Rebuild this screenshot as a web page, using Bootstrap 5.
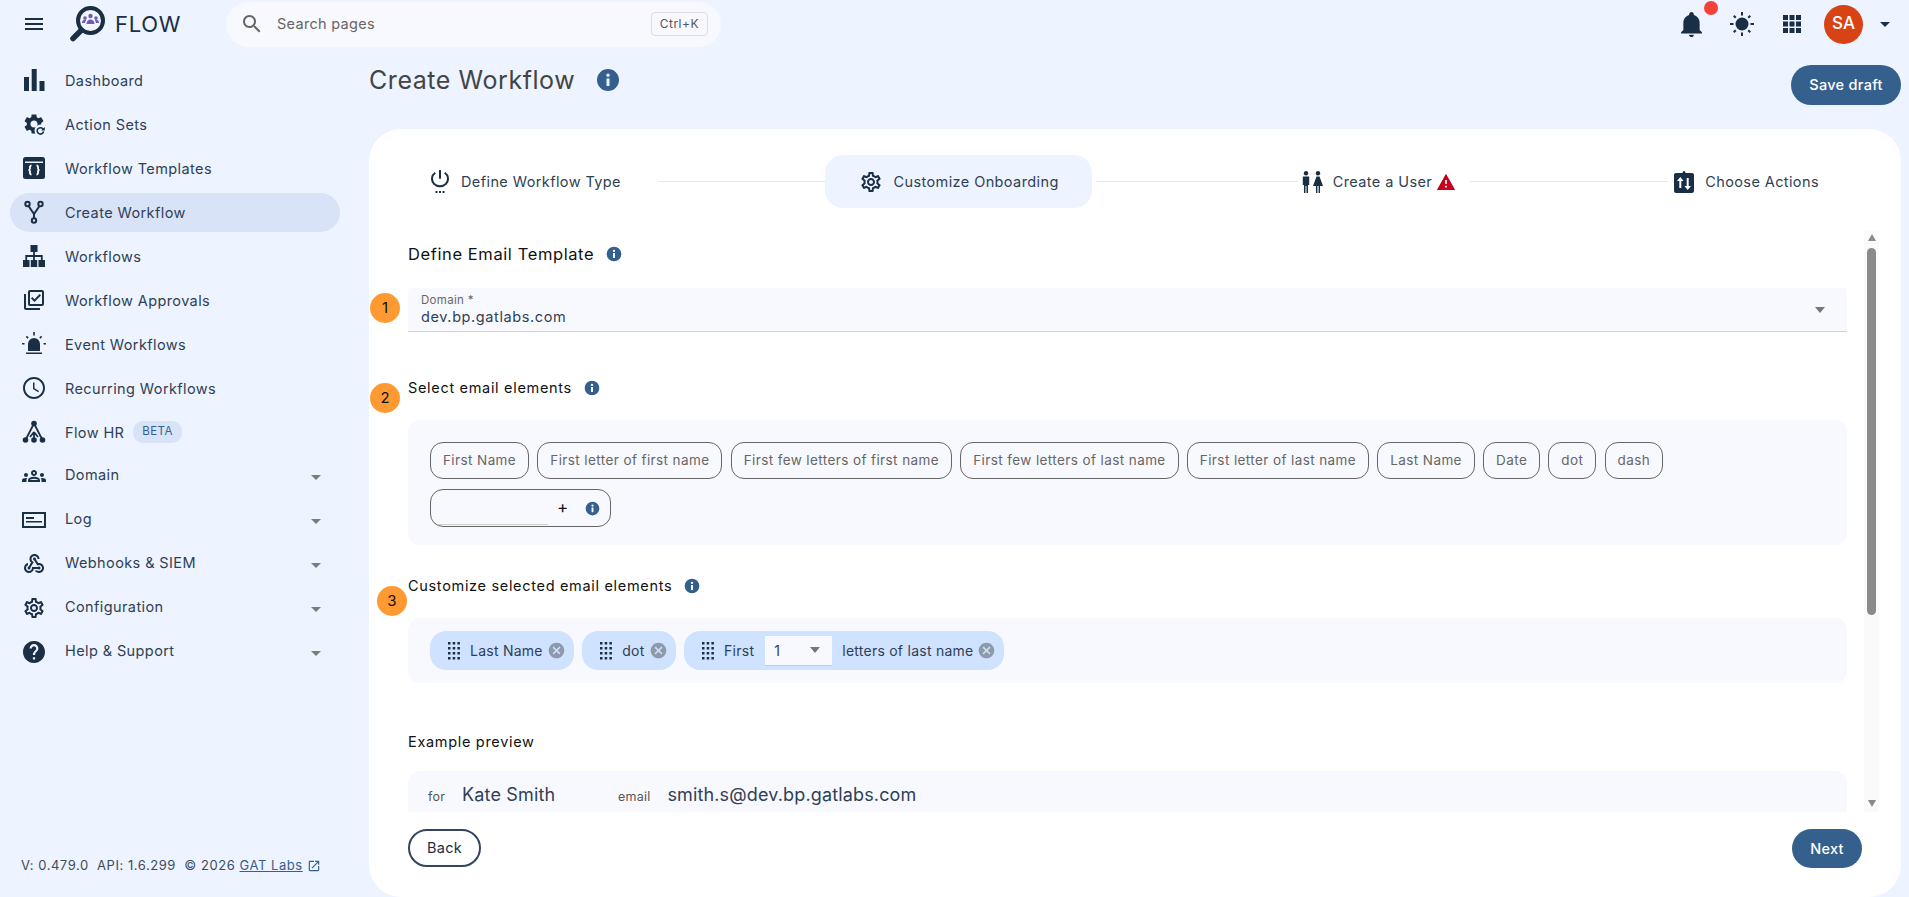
<!DOCTYPE html>
<html lang="en">
<head>
  <meta charset="UTF-8">
  <meta name="viewport" content="width=device-width, initial-scale=1">
  <title>Create Workflow - FLOW</title>
  <link href="https://cdn.jsdelivr.net/npm/bootstrap@5.3.0/dist/css/bootstrap.min.css" rel="stylesheet">
  <style>
    html, body { height: 100%; }
    body {
      background: #edf3ff;
      font-family: Inter, "Liberation Sans", sans-serif;
      color: #2f3f55;
      font-size: 14.5px;
      overflow: hidden;
    }
    .ico { width: 24px; height: 24px; fill: #1a2e46; flex: none; }

    /* top bar */
    .top-bar { height: 48px; padding-left: 22px; }
    .brand-logo { width: 38px; height: 38px; margin-left: 23px; flex: none; }
    .brand-name { font-size: 22px; color: #1a2e46; margin-left: 8px; width: 111px; letter-spacing: .7px; }
    .search-pill { width: 495px; height: 45px; background: #f7f9ff; border-radius: 23px; padding: 0 13px 0 14px; color: #666; font-size: 14.5px; letter-spacing: .3px; }
    .search-pill .ico { fill: #666; }
    .search-text { margin-left: 13px; }
    .search-keys { border: 1px solid #dcdee3; border-radius: 4px; font-size: 12px; padding: 3px 8px; color: #555; height: 24px; letter-spacing: .5px; }
    .top-tools { padding-right: 19px; }
    .bell-wrap { margin-right: 28px; }
    .bell-ico { width: 21px; height: 25px; }
    .bell-dot { width: 14px; height: 14px; background: #f44336; border-radius: 50%; top: -11px; right: -16px; }
    .sun-ico { margin-right: 26px; }
    .apps-ico { margin-right: 20px; }
    .avatar-round { width: 39px; height: 39px; background: #d84315; color: #fff; border-radius: 50%; font-size: 17px; font-weight: 500; margin-right: 17px; }
    .caret-down { width: 0; height: 0; border-left: 5.5px solid transparent; border-right: 5.5px solid transparent; border-top: 5.5px solid #1a2e46; }

    /* sidebar */
    .side-col { width: 369px; height: 849px; flex: none; padding-top: 10px; }
    .side-item { width: 330px; height: 39px; margin: 2.5px 0 2.5px 10px; padding: 0 19px 0 12px; border-radius: 20px; color: #2f3f55; text-decoration: none; letter-spacing: .4px; }
    .side-item .ico { margin-right: 19px; }
    .side-item.is-active { background: #d8e3f8; }
    .side-label { margin-top: 2px; }
    .side-item.is-group .side-label { margin: 0 0 3px; }
    .beta-tag { background: #d8e3f8; color: #35608d; font-size: 11.5px; border-radius: 10px; padding: 2px 9px; margin-left: 9px; }
    .side-caret { width: 0; height: 0; border-left: 5.5px solid transparent; border-right: 5.5px solid transparent; border-top: 5.5px solid #7b7b7b; margin-left: auto; margin-top: 2px; }
    .side-foot { margin-top: auto; padding: 0 0 22px 21px; font-size: 13px; letter-spacing: .55px; color: #3d4b5e; }
    .side-foot a { color: #35608d; }
    .side-foot .ico { width: 14px; height: 14px; fill: #35608d; vertical-align: -3px; margin-left: 4px; }

    /* main */
    .main-col { padding-right: 8px; min-width: 0; }
    .title-row { height: 81px; }
    .page-title { font-size: 25px; font-weight: 400; color: #444; margin: 14px 0 0; line-height: 36px; letter-spacing: .56px; }
    .title-info { width: 24px; height: 24px; margin: 20px 0 0 21px; fill: #35608d; }
    .btn-flow { background: #35608d; color: #fff; border: 0; border-radius: 20px; font-size: 14.5px; font-weight: 500; letter-spacing: .3px; }
    .btn-flow:hover { background: #2c5179; color: #fff; }
    .btn-save { width: 110px; height: 40px; margin-top: 17px; }
    .flow-sheet { height: 768px; background: #fff; border-radius: 32px; }

    /* stepper */
    .step-row { padding: 26px 0 0 59px; height: 101px; }
    .step-item { height: 53px; white-space: nowrap; letter-spacing: .4px; color: #2f3f55; }
    .step-item .ico { margin-right: 9px; }
    .step-item.is-active { background: #edf3ff; border-radius: 18px; padding: 0 33px 0 34px; }
    .step-item.is-active .ico { margin-right: 10.5px; }
    .step-line { height: 1px; background: #e6e6e6; flex: none; }
    .line-one { width: 166px; margin: 26px 0 0 38px; }
    .line-two { width: 201px; margin: 26px 2px 0 5px; }
    .line-three { width: 198px; margin: 26px 4px 0 14px; }
    .step-item .warn-ico { width: 20px; height: 20px; fill: #c4001d; margin: 0 0 0 4px; }

    /* scrolling part */
    .scroll-row { height: 582px; }
    .scroll-inner { width: 1478px; padding-left: 39px; overflow: hidden; }
    .sect-head { height: 24px; color: #111; letter-spacing: .68px; }
    .sect-head-lg { font-size: 16.5px; letter-spacing: .6px; margin-top: 12px; }
    .info-ico { width: 16px; height: 16px; fill: #35608d; margin-left: 12px; }
    .num-bullet { width: 30px; height: 30px; background: #ff9a33; color: #111; border-radius: 50%; font-size: 15px; left: -38px; }
    .n-one { top: 5px; }
    .n-two { top: 7px; }
    .n-three { top: 12px; left: -31px; }
    .sect-wrap-two { margin-top: 44px; }
    .sect-wrap-three { margin-top: 29px; }
    .sect-wrap-four { margin-top: 47px; }
    .pale-panel { background: #f8f9ff; border-radius: 12px; }
    .domain-field { height: 44px; margin-top: 22px; background: #f8f9ff; border-bottom: 1px solid #cfd2d8; border-radius: 4px 4px 0 0; padding: 1px 22px 0 13px; }
    .domain-label { font-size: 11.5px; color: #666; line-height: 15px; letter-spacing: .3px; }
    .domain-value { font-size: 14.5px; line-height: 20px; margin-top: -1px; color: #2f3f55; letter-spacing: .6px; }
    .field-caret { width: 0; height: 0; border-left: 5.5px solid transparent; border-right: 5.5px solid transparent; border-top: 6px solid #777; }
    .panel-select { margin-top: 20px; height: 125px; padding: 22px 22px 0; }
    .tag-gap { gap: 8.2px; }
    .gap-chosen { gap: 8.5px; }
    .tag-outline { height: 37px; border: 1px solid #666; border-radius: 13px; padding: 0 12px; color: #666; background: transparent; white-space: nowrap; letter-spacing: .4px; font-size: 13.5px; }
    .tag-input { width: 181px; height: 38px; margin-top: 10px; border: 1px solid #666; border-radius: 13px; padding: 0 9px 0 7px; }
    .tag-line { width: 110px; border-bottom: 1px solid #ccc; height: 32px; margin-top: 1px; }
    .tag-plus { font-size: 17px; color: #111; margin-left: 9px; }
    .tag-info { width: 15px; height: 15px; fill: #35608d; margin-left: 17px; }
    .panel-chosen { margin-top: 20px; height: 65px; padding: 13px 22px; }
    .tag-solid { height: 39px; background: #cfe2ff; border-radius: 16px; padding: 0 9px 0 18px; color: #2f3f55; white-space: nowrap; letter-spacing: .25px; font-size: 14px; }
    .drag-ico { width: 12px; height: 20px; fill: #1a2e46; margin-right: 10px; flex: none; }
    .close-ico { width: 17px; height: 17px; fill: #8e99a9; margin-left: 5px; flex: none; }
    .mini-select { width: 67px; height: 30px; background: #f8f9ff; border-bottom: 1px solid #c9ccd2; margin: 0 10px 0 11px; padding: 0 12px 0 9px; }
    .panel-sample { margin-top: 17px; height: 80px; padding: 10px 20px 0; }
    .sample-key { font-size: 12.5px; color: #555; letter-spacing: .2px; }
    .sample-val { font-size: 18px; color: #2f3f55; letter-spacing: .15px; line-height: 28px; margin-left: 17px; }
    .sample-name { width: 156px; }

    /* scrollbar */
    .bar-track { width: 15px; height: 582px; margin-left: 17px; background: #fafafa; }
    .bar-up { width: 0; height: 0; border-left: 4.5px solid transparent; border-right: 4.5px solid transparent; border-bottom: 7px solid #8a8a8a; margin-top: 4px; }
    .bar-thumb { width: 9px; height: 367px; background: #8a8a8a; border-radius: 5px; margin-top: 7px; }
    .bar-down { width: 0; height: 0; border-left: 4.5px solid transparent; border-right: 4.5px solid transparent; border-top: 7px solid #8a8a8a; margin-top: auto; margin-bottom: 5px; }

    .foot-row { padding: 17px 39px 0; }
    .btn-back { width: 73px; height: 38px; border: 2px solid #33465e; border-radius: 19px; background: #fff; color: #1a2e46; font-size: 14.5px; letter-spacing: .3px; }
    .btn-next { width: 70px; height: 39px; }
  </style>
</head>
<body>

  <!-- icon sprite -->
  <svg width="0" height="0" class="d-block">
    <defs>
      <symbol id="i-menu" viewBox="0 0 24 24"><path d="M3 18h18v-2H3v2zm0-5h18v-2H3v2zm0-7v2h18V6H3z"/></symbol>
      <symbol id="i-search" viewBox="0 0 24 24"><path d="M15.5 14h-.79l-.28-.27C15.41 12.59 16 11.11 16 9.5 16 5.91 13.09 3 9.5 3S3 5.91 3 9.5 5.91 16 9.5 16c1.61 0 3.09-.59 4.23-1.57l.27.28v.79l5 4.99L20.49 19l-4.99-5zm-6 0C7.01 14 5 11.99 5 9.5S7.01 5 9.5 5 14 7.01 14 9.5 11.99 14 9.5 14z"/></symbol>
      <symbol id="i-bell" viewBox="3 1.500 18 21.500"><path d="M12 23c1.100 0 2-.9 2-2h-4c0 1.100.9 2 2 2zm7-6v-6c0-3.400-1.900-6-5-6.900V3.500C14 2.400 13.100 1.500 12 1.500S10 2.400 10 3.500v.6C6.900 5 5 7.600 5 11v6l-2 2v1h18v-1l-2-2z"/></symbol>
      <symbol id="i-sun" viewBox="0 0 24 24"><circle cx="12" cy="12" r="6.500"/><path d="M11 0h2v3.500h-2zM11 20.500h2V24h-2zM0 11h3.500v2H0zM20.500 11H24v2h-3.500zM3 4.400 4.400 3 6.500 5.100 5.100 6.500zM17.500 18.900l1.400-1.400L21 19.600 19.600 21zM3 19.600 5.100 17.500l1.400 1.400L4.400 21zM17.500 5.100 19.600 3 21 4.400l-2.100 2.100z"/></symbol>
      <symbol id="i-apps" viewBox="0 0 24 24"><path d="M3 3h5v5H3zM9.500 3h5v5h-5zM16 3h5v5h-5zM3 9.500h5v5H3zM9.500 9.500h5v5h-5zM16 9.500h5v5h-5zM3 16h5v5H3zM9.500 16h5v5h-5zM16 16h5v5h-5z"/></symbol>
      <symbol id="i-bars" viewBox="0 0 24 24"><path d="M2 9h5v14H2zM9.700 1h5v22h-5zM17.500 13h5v10h-5z"/></symbol>
      <symbol id="i-gear-fill" viewBox="0 0 24 24"><path d="M19.140 12.940c.04-.3.06-.61.06-.94 0-.32-.02-.64-.07-.94l2.030-1.580c.18-.14.23-.41.12-.61l-1.920-3.320c-.12-.22-.37-.29-.59-.22l-2.390.96c-.5-.38-1.030-.7-1.620-.94l-.36-2.540c-.04-.24-.24-.41-.48-.41h-3.840c-.24 0-.43.17-.47.41l-.36 2.540c-.59.24-1.130.57-1.620.94l-2.390-.96c-.22-.08-.47 0-.59.22L2.740 8.870c-.12.21-.08.47.12.61l2.030 1.580c-.05.3-.09.63-.09.94s.02.64.07.94l-2.030 1.580c-.18.14-.23.41-.12.61l1.920 3.320c.12.22.37.29.59.22l2.390-.96c.5.38 1.030.7 1.620.94l.36 2.540c.05.24.24.41.48.41h3.840c.24 0 .44-.17.47-.41l.36-2.540c.59-.24 1.130-.56 1.620-.94l2.390.96c.22.08.47 0 .59-.22l1.920-3.320c.12-.22.07-.47-.12-.61l-2.010-1.580zM12 15.600c-1.980 0-3.600-1.620-3.600-3.600s1.620-3.600 3.600-3.600 3.600 1.620 3.600 3.600-1.620 3.600-3.600 3.600z"/><circle cx="18.500" cy="18.500" r="6" fill="#edf3ff"/><path d="M21.500 16.300a4 4 0 1 0 .9 3.200h-1.700a2.400 2.400 0 1 1-.4-2.100l-1.300 1.200h3.800v-3.500z"/></symbol>
      <symbol id="i-template" viewBox="0 0 24 24"><path fill-rule="evenodd" d="M3.500 1h17A2.500 2.500 0 0 1 23 3.500v17a2.500 2.500 0 0 1-2.500 2.500h-17A2.500 2.500 0 0 1 1 20.500v-17A2.500 2.500 0 0 1 3.500 1zM3 5.500v1.500h18V5.500z"/><path d="M9.500 9.500c-2 0-1.500 2.500-1.500 3 0 1-1 1.500-1.500 1.500.5 0 1.500.5 1.500 1.500 0 .5-.5 3 1.500 3M14.500 9.500c2 0 1.500 2.500 1.500 3 0 1 1 1.500 1.500 1.500-.5 0-1.500.5-1.500 1.500 0 .5.5 3-1.500 3" fill="none" stroke="#fff" stroke-width="1.800"/></symbol>
      <symbol id="i-fork" viewBox="0 0 24 24"><g fill="none" stroke="#1a2e46" stroke-width="2"><circle cx="5.500" cy="4" r="2.200"/><circle cx="18.500" cy="4" r="2.200"/><circle cx="12" cy="20.500" r="2.200"/><path d="M6.500 6 12 14l5.500-8M12 14v4.300"/></g></symbol>
      <symbol id="i-tree" viewBox="0 0 24 24"><path d="M8.500 1h7v7h-7zM1 16h6.500v7H1zM8.800 16h6.400v7H8.800zM16.500 16H23v7h-6.500z"/><path d="M12 8v8M4.200 16v-4h15.600v4" fill="none" stroke="#1a2e46" stroke-width="1.800"/></symbol>
      <symbol id="i-check-stack" viewBox="0 0 24 24"><path d="M20 4v12H8V4h12m0-2H8c-1.100 0-2 .9-2 2v12c0 1.100.9 2 2 2h12c1.100 0 2-.9 2-2V4c0-1.100-.9-2-2-2zm-7.530 12L9 10.500l1.400-1.410 2.070 2.080L17.600 6 19 7.410 12.470 14zM4 6H2v14c0 1.100.9 2 2 2h14v-2H4V6z"/></symbol>
      <symbol id="i-siren" viewBox="0 0 24 24"><path d="M6 19v-7a6 6 0 0 1 12 0v7zM4 20.500h16V22H4zM11.200 0h1.600v3.500h-1.600zM0 11h2.500v1.600H0zM21.500 11H24v1.600h-2.500zM3.800 4.900 4.900 3.800l1.800 1.800-1.100 1.100zM17.300 5.600l1.800-1.800 1.100 1.100-1.800 1.800z"/></symbol>
      <symbol id="i-clock" viewBox="0 0 24 24"><path d="M11.990 1C5.900 1 1 5.930 1 12s4.900 11 10.990 11C18.070 23 23 18.070 23 12S18.070 1 11.990 1zM12 21c-4.970 0-9-4.030-9-9s4.030-9 9-9 9 4.030 9 9-4.030 9-9 9zm.5-14.500H11V13l5.250 3.150.75-1.230-4.500-2.670z"/></symbol>
      <symbol id="i-branch" viewBox="0 0 24 24"><circle cx="12" cy="3.500" r="2.800"/><circle cx="3.500" cy="20" r="2.800"/><circle cx="12" cy="20" r="2.800"/><circle cx="20.500" cy="20" r="2.800"/><path d="M12 3.500 3.500 20M12 3.500 20.500 20M12 12v8M12 12l-4 5M12 12l4 5" fill="none" stroke="#1a2e46" stroke-width="1.800"/></symbol>
      <symbol id="i-groups" viewBox="0 0 24 24"><path d="M4 13c1.100 0 2-.9 2-2s-.9-2-2-2-2 .9-2 2 .9 2 2 2zm1.130 1.100C4.760 14.040 4.390 14 4 14c-.99 0-1.930.21-2.780.58C.48 14.900 0 15.620 0 16.430V18h4.500v-1.610c0-.83.23-1.610.63-2.290zM20 13c1.100 0 2-.9 2-2s-.9-2-2-2-2 .9-2 2 .9 2 2 2zm4 3.430c0-.81-.48-1.530-1.220-1.850C21.930 14.210 20.990 14 20 14c-.39 0-.76.04-1.130.1.4.68.63 1.460.63 2.290V18H24v-1.570zm-7.760-2.780C15.070 13.140 13.630 12.750 12 12.750c-1.630 0-3.070.39-4.240.9C6.680 14.130 6 15.210 6 16.390V18h12v-1.610c0-1.180-.68-2.260-1.760-2.740zM8.070 16c.09-.23.13-.39.91-.69.97-.38 1.990-.56 3.020-.56s2.050.18 3.020.56c.77.3.81.46.91.69H8.070zM12 8c.55 0 1 .45 1 1s-.45 1-1 1-1-.45-1-1 .45-1 1-1m0-2c-1.660 0-3 1.340-3 3s1.340 3 3 3 3-1.340 3-3-1.340-3-3-3z"/></symbol>
      <symbol id="i-log" viewBox="0 0 24 24"><path fill-rule="evenodd" d="M0 4h24v16H0zm2 2v12h20V6z"/><path d="M4 9h8v2H4zM4 13h16v1.500H4z"/></symbol>
      <symbol id="i-hook" viewBox="0 0 24 24"><path d="M10 15h5.880c.27-.31.67-.5 1.120-.5.83 0 1.500.67 1.500 1.500s-.67 1.500-1.500 1.500c-.44 0-.84-.19-1.120-.5H11.900c-.46 2.280-2.480 4-4.900 4-2.760 0-5-2.240-5-5 0-2.420 1.720-4.440 4-4.900v2.070c-1.160.41-2 1.530-2 2.830 0 1.650 1.350 3 3 3s3-1.350 3-3v-1zm2.500-11c1.650 0 3 1.350 3 3h2c0-2.760-2.240-5-5-5s-5 2.240-5 5c0 1.430.6 2.710 1.550 3.620l-2.350 3.900c-.68.14-1.200.75-1.200 1.480 0 .83.67 1.500 1.500 1.500s1.500-.67 1.500-1.500c0-.16-.02-.31-.07-.45l3.380-5.630C10.490 9.610 9.500 8.420 9.500 7c0-1.650 1.350-3 3-3zm4.500 9c-.64 0-1.230.2-1.720.54l-3.050-5.070C11.530 8.350 11 7.740 11 7c0-.83.67-1.500 1.500-1.500S14 6.170 14 7c0 .15-.02.29-.06.43l2.190 3.650c.28-.05.57-.08.87-.08 2.760 0 5 2.240 5 5s-2.240 5-5 5c-1.850 0-3.470-1.010-4.330-2.500h2.670c.48.32 1.050.5 1.660.5 1.650 0 3-1.350 3-3s-1.350-3-3-3z"/></symbol>
      <symbol id="i-gear" viewBox="0 0 24 24"><path d="M19.430 12.980c.04-.32.07-.64.07-.98 0-.34-.03-.66-.07-.98l2.110-1.650c.19-.15.24-.42.12-.64l-2-3.460c-.09-.16-.26-.25-.44-.25-.06 0-.12.01-.17.03l-2.490 1c-.52-.4-1.080-.73-1.690-.98l-.38-2.650C14.460 2.180 14.250 2 14 2h-4c-.25 0-.46.18-.49.42l-.38 2.650c-.61.25-1.170.59-1.690.98l-2.490-1c-.06-.02-.12-.03-.18-.03-.17 0-.34.09-.43.25l-2 3.460c-.13.22-.07.49.12.64l2.110 1.650c-.04.32-.07.65-.07.98 0 .33.03.66.07.98l-2.110 1.650c-.19.15-.24.42-.12.64l2 3.460c.09.16.26.25.44.25.06 0 .12-.01.17-.03l2.490-1c.52.4 1.080.73 1.690.98l.38 2.650c.03.24.24.42.49.42h4c.25 0 .46-.18.49-.42l.38-2.650c.61-.25 1.170-.59 1.690-.98l2.490 1c.06.02.12.03.18.03.17 0 .34-.09.43-.25l2-3.460c.12-.22.07-.49-.12-.64l-2.110-1.650zm-1.980-1.710c.04.31.05.52.05.73 0 .21-.02.43-.05.73l-.14 1.130.89.7 1.080.84-.7 1.210-1.270-.51-1.040-.42-.9.68c-.43.32-.84.56-1.250.73l-1.060.43-.16 1.130-.2 1.350h-1.400l-.19-1.350-.16-1.130-1.060-.43c-.43-.18-.83-.41-1.230-.71l-.91-.7-1.060.43-1.270.51-.7-1.210 1.080-.84.89-.7-.14-1.130c-.03-.31-.05-.54-.05-.74s.02-.43.05-.73l.14-1.130-.89-.7-1.080-.84.7-1.210 1.270.51 1.040.42.9-.68c.43-.32.84-.56 1.250-.73l1.060-.43.16-1.130.2-1.350h1.390l.19 1.350.16 1.130 1.060.43c.43.18.83.41 1.230.71l.91.7 1.060-.43 1.270-.51.7 1.210-1.070.85-.89.7.14 1.130zM12 8c-2.210 0-4 1.790-4 4s1.790 4 4 4 4-1.790 4-4-1.790-4-4-4zm0 6c-1.100 0-2-.9-2-2s.9-2 2-2 2 .9 2 2-.9 2-2 2z"/></symbol>
      <symbol id="i-help" viewBox="0 0 24 24"><path d="M12 1C5.930 1 1 5.930 1 12s4.930 11 11 11 11-4.930 11-11S18.070 1 12 1zm1.100 18.500h-2.200v-2.200h2.200v2.200zm2.280-8.530-.99 1.010c-.79.8-1.290 1.460-1.290 3.120h-2.200v-.55c0-1.210.5-2.310 1.290-3.110l1.360-1.390c.41-.4.650-.95.650-1.550 0-1.210-.99-2.200-2.200-2.200s-2.200.99-2.200 2.200H7.600c0-2.430 1.970-4.400 4.400-4.400s4.400 1.970 4.400 4.400c0 .97-.4 1.850-1.020 2.470z"/></symbol>
      <symbol id="i-info" viewBox="0 0 24 24"><path fill-rule="evenodd" d="M12 1a11 11 0 1 1 0 22 11 11 0 0 1 0-22zm-1.500 9.500V18h3v-7.500zM12 5.500A1.750 1.750 0 1 0 12 9a1.750 1.750 0 0 0 0-3.500z"/></symbol>
      <symbol id="i-link" viewBox="0 0 24 24"><path d="M19 19H5V5h7V3H5c-1.110 0-2 .9-2 2v14c0 1.100.89 2 2 2h14c1.100 0 2-.9 2-2v-7h-2v7zM14 3v2h3.590l-9.830 9.830 1.410 1.410L19 6.410V10h2V3h-7z"/></symbol>
      <symbol id="i-power" viewBox="0 0 24 24"><path d="M12 1v9.500M7.200 4a8 8 0 1 0 9.600 0" transform="translate(0 -1) scale(1 .94)" fill="none" stroke="#1a2e46" stroke-width="2"/><path d="M7.500 21h2v2h-2zM11 21h2v2h-2zM14.500 21h2v2h-2z"/></symbol>
      <symbol id="i-people" viewBox="0 0 24 24"><circle cx="6" cy="3.200" r="2.200"/><path d="M2.800 6.500h6.400v8.500H8v8H6.500v-7h-1v7H4v-8H2.800z"/><circle cx="18" cy="3.200" r="2.200"/><path d="M16.500 6.500h3L23 16h-3v7h-1.400v-7h-1.200v7H16v-7h-3z"/></symbol>
      <symbol id="i-warn" viewBox="0 0 24 24"><path d="M1 21.500h22L12 2 1 21.500zm12-3h-2v-2h2v2zm0-4h-2V9.500h2v5z"/></symbol>
      <symbol id="i-swap" viewBox="0 0 24 24"><path fill-rule="evenodd" d="M4 3h6.500C10.800 1.500 11.300 1 12 1s1.200.5 1.500 2H20c1.100 0 2 .9 2 2v16c0 1.100-.9 2-2 2H4c-1.100 0-2-.9-2-2V5c0-1.100.9-2 2-2zm4.300 4L5 11h2.300v7h2v-7h2.300zm6.400 1v8h-2.300l3.300 4 3.300-4h-2.300V8z"/></symbol>
      <symbol id="i-drag" viewBox="0 0 12 20"><path d="M0 1h2.500v2.500H0zM4.700 1h2.500v2.500H4.700zM9.400 1h2.500v2.500H9.400zM0 6h2.500v2.500H0zM4.700 6h2.500v2.500H4.700zM9.400 6h2.500v2.500H9.400zM0 11h2.500v2.500H0zM4.700 11h2.500v2.500H4.700zM9.400 11h2.500v2.500H9.400zM0 16h2.500v2.500H0zM4.700 16h2.500v2.500H4.700zM9.400 16h2.500v2.500H9.400z"/></symbol>
      <symbol id="i-close" viewBox="0 0 24 24"><path d="M12 1C5.920 1 1 5.920 1 12s4.920 11 11 11 11-4.920 11-11S18.080 1 12 1zm5.500 14.950L15.950 17.500 12 13.550 8.050 17.500 6.500 15.950 10.450 12 6.500 8.050 8.050 6.500 12 10.450 15.950 6.500l1.550 1.550L13.550 12l3.950 3.950z"/></symbol>
    </defs>
  </svg>

  <!-- Top bar -->
  <header class="top-bar d-flex align-items-center">
    <svg class="ico"><use href="#i-menu"/></svg>
    <svg class="brand-logo" viewBox="0 0 38 38">
      <circle cx="21.500" cy="15.500" r="12.500" fill="#f4f4fb" stroke="#1a2e46" stroke-width="4"/>
      <g fill="#6a5fb5">
        <circle cx="21.500" cy="11" r="2.200"/><circle cx="16" cy="13" r="1.800"/><circle cx="27" cy="13" r="1.800"/>
        <path d="M17.500 19c0-3 2-4.500 4-4.500s4 1.500 4 4.500zM13 18c0-2 1.200-3.400 3-3.400.5 0 1 .1 1.300.3-.8.9-1.200 2-1.300 3.100zM30 18c0-2-1.200-3.400-3-3.400-.5 0-1 .1-1.300.3.8.9 1.200 2 1.300 3.100z"/>
      </g>
      <path d="M12 25.500 4 33.500" stroke="#1a2e46" stroke-width="5.500" stroke-linecap="round"/>
    </svg>
    <span class="brand-name">FLOW</span>
    <div class="search-pill d-flex align-items-center">
      <svg class="ico"><use href="#i-search"/></svg>
      <span class="search-text">Search pages</span>
      <span class="search-keys ms-auto d-flex align-items-center">Ctrl+K</span>
    </div>
    <div class="top-tools ms-auto d-flex align-items-center">
      <span class="bell-wrap position-relative d-flex">
        <svg class="ico bell-ico"><use href="#i-bell"/></svg>
        <span class="bell-dot position-absolute"></span>
      </span>
      <svg class="ico sun-ico"><use href="#i-sun"/></svg>
      <svg class="ico apps-ico"><use href="#i-apps"/></svg>
      <span class="avatar-round d-flex align-items-center justify-content-center">SA</span>
      <span class="caret-down"></span>
    </div>
  </header>

  <div class="d-flex">
    <!-- Sidebar -->
    <aside class="side-col d-flex flex-column">
      <a class="side-item d-flex align-items-center" href="#"><svg class="ico"><use href="#i-bars"/></svg><span class="side-label">Dashboard</span></a>
      <a class="side-item d-flex align-items-center" href="#"><svg class="ico"><use href="#i-gear-fill"/></svg><span class="side-label">Action Sets</span></a>
      <a class="side-item d-flex align-items-center" href="#"><svg class="ico"><use href="#i-template"/></svg><span class="side-label">Workflow Templates</span></a>
      <a class="side-item is-active d-flex align-items-center" href="#"><svg class="ico"><use href="#i-fork"/></svg><span class="side-label">Create Workflow</span></a>
      <a class="side-item d-flex align-items-center" href="#"><svg class="ico"><use href="#i-tree"/></svg><span class="side-label">Workflows</span></a>
      <a class="side-item d-flex align-items-center" href="#"><svg class="ico"><use href="#i-check-stack"/></svg><span class="side-label">Workflow Approvals</span></a>
      <a class="side-item d-flex align-items-center" href="#"><svg class="ico"><use href="#i-siren"/></svg><span class="side-label">Event Workflows</span></a>
      <a class="side-item d-flex align-items-center" href="#"><svg class="ico"><use href="#i-clock"/></svg><span class="side-label">Recurring Workflows</span></a>
      <a class="side-item d-flex align-items-center" href="#"><svg class="ico"><use href="#i-branch"/></svg><span class="side-label">Flow HR</span><span class="beta-tag">BETA</span></a>
      <a class="side-item is-group d-flex align-items-center" href="#"><svg class="ico"><use href="#i-groups"/></svg><span class="side-label">Domain</span><span class="side-caret"></span></a>
      <a class="side-item is-group d-flex align-items-center" href="#"><svg class="ico"><use href="#i-log"/></svg><span class="side-label">Log</span><span class="side-caret"></span></a>
      <a class="side-item is-group d-flex align-items-center" href="#"><svg class="ico"><use href="#i-hook"/></svg><span class="side-label">Webhooks &amp; SIEM</span><span class="side-caret"></span></a>
      <a class="side-item is-group d-flex align-items-center" href="#"><svg class="ico"><use href="#i-gear"/></svg><span class="side-label">Configuration</span><span class="side-caret"></span></a>
      <a class="side-item is-group d-flex align-items-center" href="#"><svg class="ico"><use href="#i-help"/></svg><span class="side-label">Help &amp; Support</span><span class="side-caret"></span></a>
      <div class="side-foot">V: 0.479.0&nbsp; API: 1.6.299&nbsp; © 2026 <a href="#">GAT Labs</a><svg class="ico"><use href="#i-link"/></svg></div>
    </aside>

    <!-- Main -->
    <main class="main-col flex-grow-1">
      <div class="title-row d-flex">
        <h1 class="page-title">Create Workflow</h1>
        <svg class="ico title-info"><use href="#i-info"/></svg>
        <button class="btn btn-flow btn-save ms-auto p-0">Save draft</button>
      </div>

      <section class="flow-sheet">
        <!-- Stepper -->
        <div class="step-row d-flex align-items-start">
          <div class="step-item d-flex align-items-center"><svg class="ico"><use href="#i-power"/></svg>Define Workflow Type</div>
          <span class="step-line line-one"></span>
          <div class="step-item is-active d-flex align-items-center"><svg class="ico"><use href="#i-gear"/></svg>Customize Onboarding</div>
          <span class="step-line line-two"></span>
          <div class="step-item d-flex align-items-center"><svg class="ico"><use href="#i-people"/></svg>Create a User<svg class="ico warn-ico"><use href="#i-warn"/></svg></div>
          <span class="step-line line-three"></span>
          <div class="step-item d-flex align-items-center"><svg class="ico"><use href="#i-swap"/></svg>Choose Actions</div>
        </div>

        <div class="scroll-row d-flex">
          <div class="scroll-inner">
            <div class="sect-head sect-head-lg d-flex align-items-center">Define Email Template<svg class="info-ico"><use href="#i-info"/></svg></div>

            <div class="position-relative">
              <span class="num-bullet position-absolute d-flex align-items-center justify-content-center n-one">1</span>
              <div class="domain-field d-flex align-items-center">
                <div class="flex-grow-1">
                  <div class="domain-label">Domain *</div>
                  <div class="domain-value">dev.bp.gatlabs.com</div>
                </div>
                <span class="field-caret"></span>
              </div>
            </div>

            <div class="position-relative sect-wrap-two">
              <span class="num-bullet position-absolute d-flex align-items-center justify-content-center n-two">2</span>
              <div class="sect-head d-flex align-items-center">Select email elements<svg class="info-ico"><use href="#i-info"/></svg></div>
            </div>
            <div class="pale-panel panel-select">
              <div class="d-flex tag-gap">
                <span class="tag-outline d-flex align-items-center">First Name</span>
                <span class="tag-outline d-flex align-items-center">First letter of first name</span>
                <span class="tag-outline d-flex align-items-center">First few letters of first name</span>
                <span class="tag-outline d-flex align-items-center">First few letters of last name</span>
                <span class="tag-outline d-flex align-items-center">First letter of last name</span>
                <span class="tag-outline d-flex align-items-center">Last Name</span>
                <span class="tag-outline d-flex align-items-center">Date</span>
                <span class="tag-outline d-flex align-items-center">dot</span>
                <span class="tag-outline d-flex align-items-center">dash</span>
              </div>
              <div class="tag-input d-flex align-items-center">
                <span class="tag-line"></span>
                <span class="tag-plus">+</span>
                <svg class="tag-info"><use href="#i-info"/></svg>
              </div>
            </div>

            <div class="position-relative sect-wrap-three">
              <span class="num-bullet position-absolute d-flex align-items-center justify-content-center n-three">3</span>
              <div class="sect-head d-flex align-items-center">Customize selected email elements<svg class="info-ico"><use href="#i-info"/></svg></div>
            </div>
            <div class="pale-panel panel-chosen d-flex gap-chosen">
              <div class="tag-solid d-flex align-items-center"><svg class="drag-ico"><use href="#i-drag"/></svg>Last Name<svg class="close-ico"><use href="#i-close"/></svg></div>
              <div class="tag-solid d-flex align-items-center"><svg class="drag-ico"><use href="#i-drag"/></svg>dot<svg class="close-ico"><use href="#i-close"/></svg></div>
              <div class="tag-solid d-flex align-items-center"><svg class="drag-ico"><use href="#i-drag"/></svg>First
                <div class="mini-select d-flex align-items-center justify-content-between"><span>1</span><span class="field-caret"></span></div>
                letters of last name<svg class="close-ico"><use href="#i-close"/></svg></div>
            </div>

            <div class="sect-head sect-wrap-four d-flex align-items-center">Example preview</div>
            <div class="pale-panel panel-sample d-flex align-items-baseline">
              <span class="sample-key">for</span><span class="sample-val sample-name">Kate Smith</span>
              <span class="sample-key">email</span><span class="sample-val">smith.s@dev.bp.gatlabs.com</span>
            </div>
          </div>

          <!-- scrollbar -->
          <div class="bar-track d-flex flex-column align-items-center">
            <span class="bar-up"></span>
            <span class="bar-thumb"></span>
            <span class="bar-down"></span>
          </div>
        </div>

        <div class="foot-row d-flex justify-content-between">
          <button class="btn btn-back p-0">Back</button>
          <button class="btn btn-flow btn-next p-0">Next</button>
        </div>
      </section>
    </main>
  </div>

</body>
</html>
